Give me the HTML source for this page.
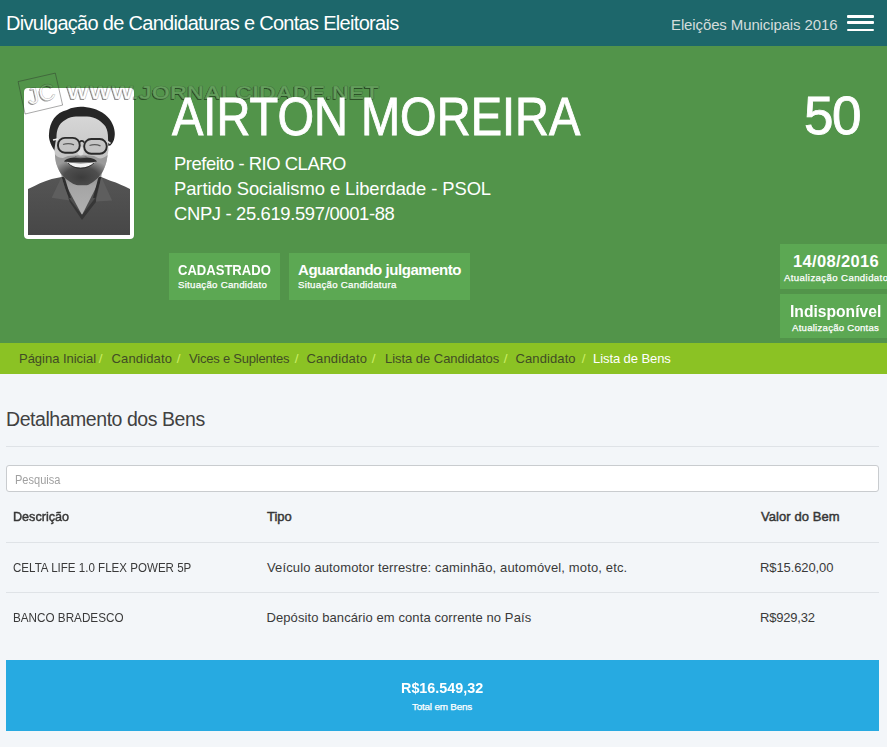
<!DOCTYPE html>
<html lang="pt">
<head>
<meta charset="utf-8">
<title>Divulgação de Candidaturas e Contas Eleitorais</title>
<style>
html,body{margin:0;padding:0;}
body{width:887px;height:747px;overflow:hidden;position:relative;background:#f3f6f9;font-family:"Liberation Sans",sans-serif;}
.t{position:absolute;white-space:nowrap;line-height:1;}
#topbar{position:absolute;left:0;top:0;width:887px;height:46px;background:#1d676b;}
#hero{position:absolute;left:0;top:46px;width:887px;height:297px;background:#52944a;}
#crumb{position:absolute;left:0;top:343px;width:887px;height:31px;background:#8bc224;}
.box{position:absolute;background:#5ca853;}
.w{color:#fff;}
.sm{-webkit-text-stroke:0.25px #fff;}
.sl{color:#cbee64;}
.bc{color:#414d25;}
.tx{color:#3a3a3a;}
.hr{position:absolute;height:1px;background:#dfe3e7;}
#search{position:absolute;left:6px;top:465px;width:871px;height:25px;border:1px solid #c9cccf;border-radius:3px;background:#fff;}
#total{position:absolute;left:6px;top:660px;width:873px;height:71px;background:#27aae1;}
</style>
</head>
<body>
<div id="topbar"></div>
<div class="t w" style="left:6px;top:13px;font-size:20px;letter-spacing:-0.7px">Divulgação de Candidaturas e Contas Eleitorais</div>
<div class="t" style="left:671px;top:17px;font-size:15px;letter-spacing:-0.12px;color:#d3dcdc">Eleições Municipais 2016</div>
<div style="position:absolute;left:847px;top:15px;width:27px;height:3px;border-radius:1px;background:#fff"></div>
<div style="position:absolute;left:847px;top:21px;width:27px;height:3px;border-radius:1px;background:#fff"></div>
<div style="position:absolute;left:847px;top:29px;width:27px;height:2px;border-radius:1px;background:#fff"></div>

<div id="hero"></div>
<div id="photo" style="position:absolute;left:24px;top:88px;width:110px;height:151px;background:#fff;border-radius:4px;box-shadow:0 0 1px rgba(0,0,0,0.25)">
<svg style="position:absolute;left:4px;top:4px" width="102" height="143" viewBox="0 0 102 143">
<defs>
<linearGradient id="gface" x1="0" y1="0" x2="0" y2="1">
<stop offset="0" stop-color="#d6d6d6"/><stop offset="0.5" stop-color="#c8c8c8"/><stop offset="1" stop-color="#b0b0b0"/>
</linearGradient>
<linearGradient id="gneck" x1="0" y1="0" x2="0" y2="1">
<stop offset="0" stop-color="#7d7d7d"/><stop offset="0.35" stop-color="#a4a4a4"/><stop offset="1" stop-color="#b2b2b2"/>
</linearGradient>
<radialGradient id="gbeard" cx="0.5" cy="0.75" r="0.6">
<stop offset="0" stop-color="#3c3c3c"/><stop offset="0.55" stop-color="#4e4e4e"/><stop offset="1" stop-color="#9a9a9a"/>
</radialGradient>
<linearGradient id="gshirt" x1="0" y1="0" x2="0" y2="1">
<stop offset="0" stop-color="#555"/><stop offset="1" stop-color="#474747"/>
</linearGradient>
</defs>
<rect width="102" height="143" fill="#fff"/>
<path d="M0,97 C8,93 16,89 23.7,86.9 L33.6,85 L73.3,85 L82.3,88.7 C90,91 96,94 102,97 L102,143 L0,143 Z" fill="url(#gshirt)"/>
<path d="M33,78 L74,78 L73.3,85 L54,123 L33.6,85 Z" fill="url(#gneck)"/>
<path d="M33.6,85 L40,106 L43,106 L36.5,85 Z" fill="#2f2f2f"/>
<path d="M73.3,85 L68,106 L65,106 L70.5,85 Z" fill="#2f2f2f"/>
<path d="M33.6,85 L23.7,105.8 L41.8,108.5 L37,96 Z" fill="#5e5e5e"/>
<path d="M73.3,85 L84.1,108.5 L67.9,109.4 L71,96 Z" fill="#5e5e5e"/>
<path d="M40,105 L54,123 L68,105 L67.9,110 L54,128 L41.8,110 Z" fill="#363636"/>
<path d="M26.4,58.5 C22,52 20.5,46 21,42 C21.5,30 28,20 39,17.9 C44,15.5 49,14.8 52.6,14.8 C60,14.8 70,17 77,22.4 C84,28 87,36 86.8,42.3 C86.5,48 85,51 82.3,53.5 L79,54 L78,42 L30,42 L28,58 Z" fill="#262626"/>
<path d="M28.5,46 C28.5,40 29.5,37 31,34 C33,30.5 35,29.5 37.2,28 C41,25.5 45,24.6 48,24.6 L58.9,24.6 C63,24.6 67,25.8 70.6,28 C74,30.5 76,32.5 77.5,34.5 C79.5,38 80,42 80,46 L80.5,58 L78.7,68.8 C77.5,74 76,77 74.2,80.5 C72,84 70,86 67.9,87.8 C64,91 61,93 58.9,93.2 L49.9,93.2 C46,93 42,90 39,87.8 C36,85.5 34,83 32.7,81.4 C30.5,78 29,74 28.2,71.5 L26.4,58 L27.5,50 Z" fill="url(#gface)"/>
<path d="M26.9,62 C27,66 27.5,69 28.2,71.5 C29,74 30.5,78 32.7,81.4 C34,83 36,85.5 39,87.8 C42,90 46,93 49.9,93.2 L58.9,93.2 C61,93 64,91 67.9,87.8 C70,86 72,84 74.2,80.5 C76,77 77.5,74 78.7,68.8 L79.6,63 C76,66 73,67 70,66 L66,64 C60,63 48,63 40,64 L35,66 C31,66 28.5,64.5 26.9,62 Z" fill="url(#gbeard)"/>
<path d="M36,69.5 C38,66 46,64.8 52.6,65.8 C59,64.8 67,66 69,69.5 C64,70.5 60,70 52.6,70 C45,70 40,70.5 36,69.5 Z" fill="#2e2e2e"/>
<path d="M39,70.3 C45,77.5 60,77.5 67,70.3 C60,71.8 45,71.8 39,70.3 Z" fill="#f4f4f4"/>
<path d="M40,71 C46,78 59,78 66,71" fill="none" stroke="#2a2a2a" stroke-width="0.9"/>

<ellipse cx="52.6" cy="59" rx="3" ry="4.5" fill="#dedede"/>
<path d="M47,64.5 C49,66 56,66 58.5,64.5" fill="none" stroke="#777" stroke-width="1.2"/>
<rect x="30" y="45.9" width="21.7" height="14.8" rx="7" ry="7" fill="rgba(180,180,180,0.25)" stroke="#2a2a2a" stroke-width="1.9"/>
<rect x="56.2" y="47" width="22.5" height="14.8" rx="7" ry="7" fill="rgba(180,180,180,0.25)" stroke="#2a2a2a" stroke-width="1.9"/>
<path d="M51.7,50 Q54,47.5 56.2,50.5" fill="none" stroke="#2a2a2a" stroke-width="1.8"/>
<path d="M25,48 L30,47" stroke="#e8e8e8" stroke-width="1.6"/>
<path d="M78.7,49 L82.5,51.5" stroke="#d8d8d8" stroke-width="1.6"/>
<path d="M35,52.5 Q40.5,50.5 46,52.8" fill="none" stroke="#5a5a5a" stroke-width="1.3"/>
<path d="M61.5,53.5 Q67,51.5 72.5,53.8" fill="none" stroke="#5a5a5a" stroke-width="1.3"/>
</svg>
</div>
<svg style="position:absolute;left:0;top:46px" width="420" height="80" viewBox="0 46 420 80">
<defs>
<filter id="emb" x="-5%" y="-30%" width="110%" height="160%">
<feOffset in="SourceAlpha" dx="-1" dy="1" result="off"/>
<feComposite in="off" in2="SourceAlpha" operator="out" result="edge"/>
<feFlood flood-color="#000" flood-opacity="0.42" result="fl"/>
<feComposite in="fl" in2="edge" operator="in" result="shadow"/>
<feFlood flood-color="#fff" flood-opacity="0.10" result="fl2"/>
<feComposite in="fl2" in2="SourceAlpha" operator="in" result="hl"/>
<feMerge><feMergeNode in="shadow"/><feMergeNode in="hl"/></feMerge>
</filter>
</defs>
<g fill="none" stroke="rgba(40,40,40,0.5)" stroke-width="0.8">
<polygon points="18.1,81.6 55.3,73.1 62.6,105.1 25.1,114"/>
</g>
<g filter="url(#emb)">
<text x="27" y="102" fill="#000" style="font-family:'Liberation Sans'" font-weight="400" font-size="23" transform="rotate(-12.9 40 93)" textLength="28" lengthAdjust="spacingAndGlyphs">JC</text>
<text x="67" y="99" fill="#000" font-family="Liberation Sans" font-weight="700" font-size="18.5" textLength="312" lengthAdjust="spacingAndGlyphs">WWW.JORNALCIDADE.NET</text>
</g>
<g fill="none" stroke="rgba(0,0,0,0.22)" stroke-width="0.7">
<text x="27" y="102" style="font-family:'Liberation Sans'" font-weight="400" font-size="23" transform="rotate(-12.9 40 93)" textLength="28" lengthAdjust="spacingAndGlyphs">JC</text>
<text x="67" y="99" font-family="Liberation Sans" font-weight="700" font-size="18.5" textLength="312" lengthAdjust="spacingAndGlyphs">WWW.JORNALCIDADE.NET</text>
</g>
</svg>

<div class="t w" style="left:172px;top:90px;font-size:53px;letter-spacing:0px;transform:scaleX(0.887);transform-origin:0 0;-webkit-text-stroke:0.9px #fff">AIRTON MOREIRA</div>
<div class="t w" style="left:804px;top:89px;font-size:53px;letter-spacing:-1.6px;-webkit-text-stroke:0.9px #fff">50</div>
<div class="t w" style="left:174px;top:154.5px;font-size:18.4px;letter-spacing:-0.45px">Prefeito - RIO CLARO</div>
<div class="t w" style="left:174px;top:179.5px;font-size:18.4px;letter-spacing:-0.08px">Partido Socialismo e Liberdade - PSOL</div>
<div class="t w" style="left:174px;top:204.5px;font-size:18.4px;letter-spacing:-0.34px">CNPJ - 25.619.597/0001-88</div>

<div class="box" style="left:169px;top:253px;width:111px;height:47px"></div>
<div class="t w" style="left:178px;top:262px;font-size:15px;font-weight:700;letter-spacing:0px;transform:scaleX(0.87);transform-origin:0 0">CADASTRADO</div>
<div class="t w sm" style="left:178px;top:279.5px;font-size:9.7px;letter-spacing:0.25px">Situação Candidato</div>
<div class="box" style="left:289px;top:253px;width:181px;height:47px"></div>
<div class="t w" style="left:298px;top:262px;font-size:15px;font-weight:700;letter-spacing:-0.45px">Aguardando julgamento</div>
<div class="t w sm" style="left:298px;top:279.5px;font-size:9.7px;letter-spacing:0.27px">Situação Candidatura</div>

<div class="box" style="left:780px;top:244px;width:107px;height:45px"></div>
<div class="t w" style="left:793px;top:253px;font-size:16.5px;font-weight:700;letter-spacing:0.35px">14/08/2016</div>
<div class="t w sm" style="left:784px;top:272.5px;font-size:9.6px;letter-spacing:0.4px">Atualização Candidato</div>
<div class="box" style="left:780px;top:294px;width:107px;height:44px"></div>
<div class="t w" style="left:790px;top:302.5px;font-size:17px;font-weight:700;letter-spacing:0px;transform:scaleX(0.92);transform-origin:0 0">Indisponível</div>
<div class="t w sm" style="left:792px;top:322.5px;font-size:9.6px;letter-spacing:0.25px">Atualização Contas</div>

<div id="crumb"></div>
<div class="t bc" style="left:19px;top:352px;font-size:13px;letter-spacing:-0.02px">Página Inicial</div>
<div class="t sl" style="left:98.8px;top:352px;font-size:13.5px">/</div>
<div class="t bc" style="left:111.5px;top:352px;font-size:13px;letter-spacing:0.15px">Candidato</div>
<div class="t sl" style="left:176.8px;top:352px;font-size:13.5px">/</div>
<div class="t bc" style="left:189px;top:352px;font-size:13px;letter-spacing:-0.21px">Vices e Suplentes</div>
<div class="t sl" style="left:294.8px;top:352px;font-size:13.5px">/</div>
<div class="t bc" style="left:306.5px;top:352px;font-size:13px;letter-spacing:0.15px">Candidato</div>
<div class="t sl" style="left:371.8px;top:352px;font-size:13.5px">/</div>
<div class="t bc" style="left:385px;top:352px;font-size:13px;letter-spacing:-0.04px">Lista de Candidatos</div>
<div class="t sl" style="left:503.8px;top:352px;font-size:13.5px">/</div>
<div class="t bc" style="left:515.5px;top:352px;font-size:13px;letter-spacing:0.1px">Candidato</div>
<div class="t sl" style="left:581.8px;top:352px;font-size:13.5px">/</div>
<div class="t w" style="left:593px;top:352px;font-size:13px;letter-spacing:-0.08px">Lista de Bens</div>

<div class="t" style="color:#414141;left:6px;top:410px;font-size:19.5px;letter-spacing:-0.45px">Detalhamento dos Bens</div>
<div class="hr" style="left:6px;top:446px;width:873px"></div>
<div id="search"></div>
<div class="t" style="left:15px;top:473.7px;font-size:12px;letter-spacing:0px;transform:scaleX(0.92);transform-origin:0 0;color:#a0a0a0">Pesquisa</div>

<div class="t tx" style="left:13px;top:510px;font-size:13px;font-weight:400;-webkit-text-stroke:0.45px #333;letter-spacing:0px;transform:scaleX(0.97);transform-origin:0 0">Descrição</div>
<div class="t tx" style="left:267px;top:510px;font-size:13px;font-weight:400;-webkit-text-stroke:0.45px #333;letter-spacing:0px">Tipo</div>
<div class="t tx" style="left:761px;top:510px;font-size:13px;font-weight:400;-webkit-text-stroke:0.45px #333;letter-spacing:0.08px">Valor do Bem</div>
<div class="hr" style="left:6px;top:542px;width:873px"></div>

<div class="t tx" style="left:13px;top:561px;font-size:13px;letter-spacing:0px;transform:scaleX(0.89);transform-origin:0 0">CELTA LIFE 1.0 FLEX POWER 5P</div>
<div class="t tx" style="left:267px;top:561px;font-size:13px;letter-spacing:0.14px">Veículo automotor terrestre: caminhão, automóvel, moto, etc.</div>
<div class="t tx" style="left:760px;top:561px;font-size:13px;letter-spacing:-0.1px">R$15.620,00</div>
<div class="hr" style="left:6px;top:592px;width:873px"></div>

<div class="t tx" style="left:12.5px;top:611px;font-size:13px;letter-spacing:0px;transform:scaleX(0.9);transform-origin:0 0">BANCO BRADESCO</div>
<div class="t tx" style="left:266.5px;top:611px;font-size:13px;letter-spacing:0.09px">Depósito bancário em conta corrente no País</div>
<div class="t tx" style="left:760px;top:611px;font-size:13px;letter-spacing:-0.2px">R$929,32</div>

<div id="total"></div>
<div class="t w" style="left:401px;top:681px;font-size:14.9px;font-weight:700;letter-spacing:0px;transform:scaleX(0.965);transform-origin:0 0">R$16.549,32</div>
<div class="t w sm" style="left:412px;top:701.5px;font-size:9.9px;letter-spacing:-0.2px">Total em Bens</div>
</body>
</html>
